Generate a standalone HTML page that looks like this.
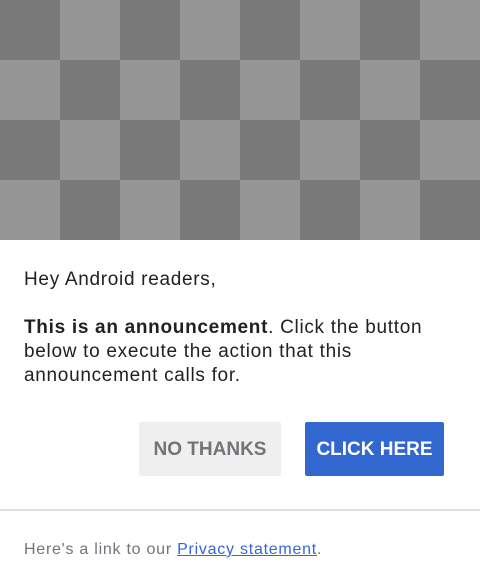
<!DOCTYPE html>
<html><head><style>
body{margin:0;width:480px;height:584px;background:#fff;font-family:"Liberation Sans",sans-serif;overflow:hidden;position:relative}
.img{position:absolute;left:0;top:0;width:480px;height:240px;
background-color:#797979;
background-image:linear-gradient(45deg,#959595 25%,transparent 25%,transparent 75%,#959595 75%),linear-gradient(45deg,#959595 25%,transparent 25%,transparent 75%,#959595 75%);
background-size:120px 120px;background-position:0 0,60px 60px}
.t{position:absolute;left:24px;color:#202124;font-size:19px;line-height:24px;letter-spacing:0.7px}
.btn{position:absolute;top:422px;height:54px;border-radius:2px;font-size:19px;line-height:56px;text-align:center;font-weight:bold}
</style></head><body>
<div class="img"></div>
<div class="t" style="top:268px">Hey Android readers,</div>
<div class="t" style="top:316px;width:410px"><b>This is an announcement</b>. Click the button below to execute the action that this announcement calls for.</div>
<div class="btn" style="left:139px;width:142px;background:#efefef;color:#70757a">NO THANKS</div>
<div class="btn" style="left:305px;width:139px;background:#3367d0;color:#fff">CLICK HERE</div>
<div style="position:absolute;left:0;top:509px;width:480px;height:2px;background:#e0e0e0"></div>
<div style="position:absolute;left:24px;top:541px;font-size:16px;color:#70757a;letter-spacing:0.75px">Here's a link to our <span style="color:#3367d6;text-decoration:underline">Privacy statement</span>.</div>
</body></html>
